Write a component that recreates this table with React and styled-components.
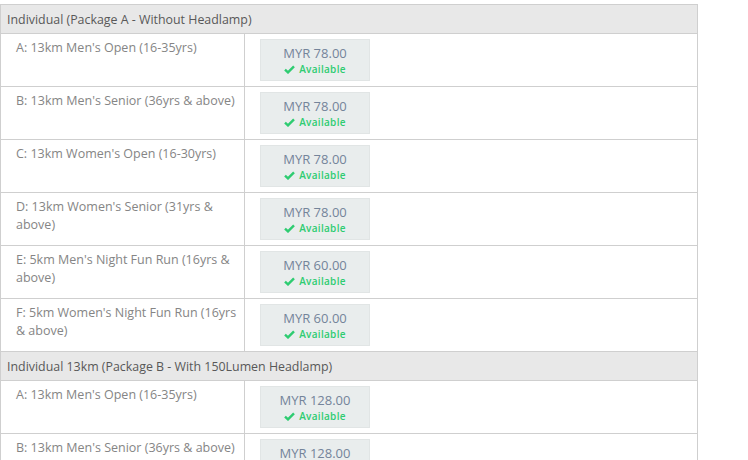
import styled, { createGlobalStyle } from 'styled-components';

const GlobalStyle = createGlobalStyle`
  body {
    margin: 0;
    background: #ffffff;
    font-family: 'Open Sans', 'Liberation Sans', sans-serif;
  }
`;

const Page = styled.div`
  padding-top: 4px;
`;

const Table = styled.table`
  width: 698px;
  border-collapse: collapse;
  table-layout: fixed;
`;

const CategoryCell = styled.th`
  background: #e8e8e8;
  border: 1px solid #cfcfcf;
  height: 28px;
  padding: 0 6px;
  text-align: left;
  font-weight: 400;
  font-size: 12.4px;
  color: #585858;
`;

const NameCell = styled.td`
  border: 1px solid #cfcfcf;
  padding: 5px 4px 0 15px;
  vertical-align: top;
  font-size: 12.5px;
  line-height: 18px;
  color: #858585;
`;

const PriceCell = styled.td`
  border: 1px solid #cfcfcf;
  padding: 5px 15px 5px 15px;
  vertical-align: top;
`;

const PriceBox = styled.div`
  width: 108px;
  height: 37px;
  border: 1px solid #e1e5e5;
  background: #e9eded;
  display: flex;
  flex-direction: column;
  align-items: center;
  padding-top: 3px;
  box-sizing: content-box;
`;

const Price = styled.span`
  font-size: 13px;
  line-height: 20px;
  color: #74849a;
`;

const Status = styled.span`
  display: flex;
  align-items: center;
  gap: 4px;
  font-size: 10px;
  line-height: 13px;
  font-weight: 600;
  letter-spacing: 0.3px;
  color: #2ecc71;
`;

function Check() {
  return (
    <svg width="11" height="9" viewBox="0 0 11 9">
      <path d="M1 4.6 L4 7.4 L10 1.4" fill="none" stroke="#2ecc71" strokeWidth="2.4" />
    </svg>
  );
}

const groups = [
  {
    title: 'Individual (Package A - Without Headlamp)',
    items: [
      ["A: 13km Men's Open (16-35yrs)", 'MYR 78.00'],
      ["B: 13km Men's Senior (36yrs & above)", 'MYR 78.00'],
      ["C: 13km Women's Open (16-30yrs)", 'MYR 78.00'],
      ["D: 13km Women's Senior (31yrs & above)", 'MYR 78.00'],
      ["E: 5km Men's Night Fun Run (16yrs & above)", 'MYR 60.00'],
      ["F: 5km Women's Night Fun Run (16yrs & above)", 'MYR 60.00'],
    ],
  },
  {
    title: 'Individual 13km (Package B - With 150Lumen Headlamp)',
    items: [
      ["A: 13km Men's Open (16-35yrs)", 'MYR 128.00'],
      ["B: 13km Men's Senior (36yrs & above)", 'MYR 128.00'],
    ],
  },
];

export default function App() {
  return (
    <Page>
      <GlobalStyle />
      <Table>
        <colgroup>
          <col style={{ width: '244px' }} />
          <col />
        </colgroup>
        <tbody>
          {groups.map((group) => [
            <tr key={group.title}>
              <CategoryCell colSpan={2}>{group.title}</CategoryCell>
            </tr>,
            ...group.items.map(([name, price]) => (
              <tr key={group.title + name}>
                <NameCell>{name}</NameCell>
                <PriceCell>
                  <PriceBox>
                    <Price>{price}</Price>
                    <Status>
                      <Check />
                      Available
                    </Status>
                  </PriceBox>
                </PriceCell>
              </tr>
            )),
          ])}
        </tbody>
      </Table>
    </Page>
  );
}
